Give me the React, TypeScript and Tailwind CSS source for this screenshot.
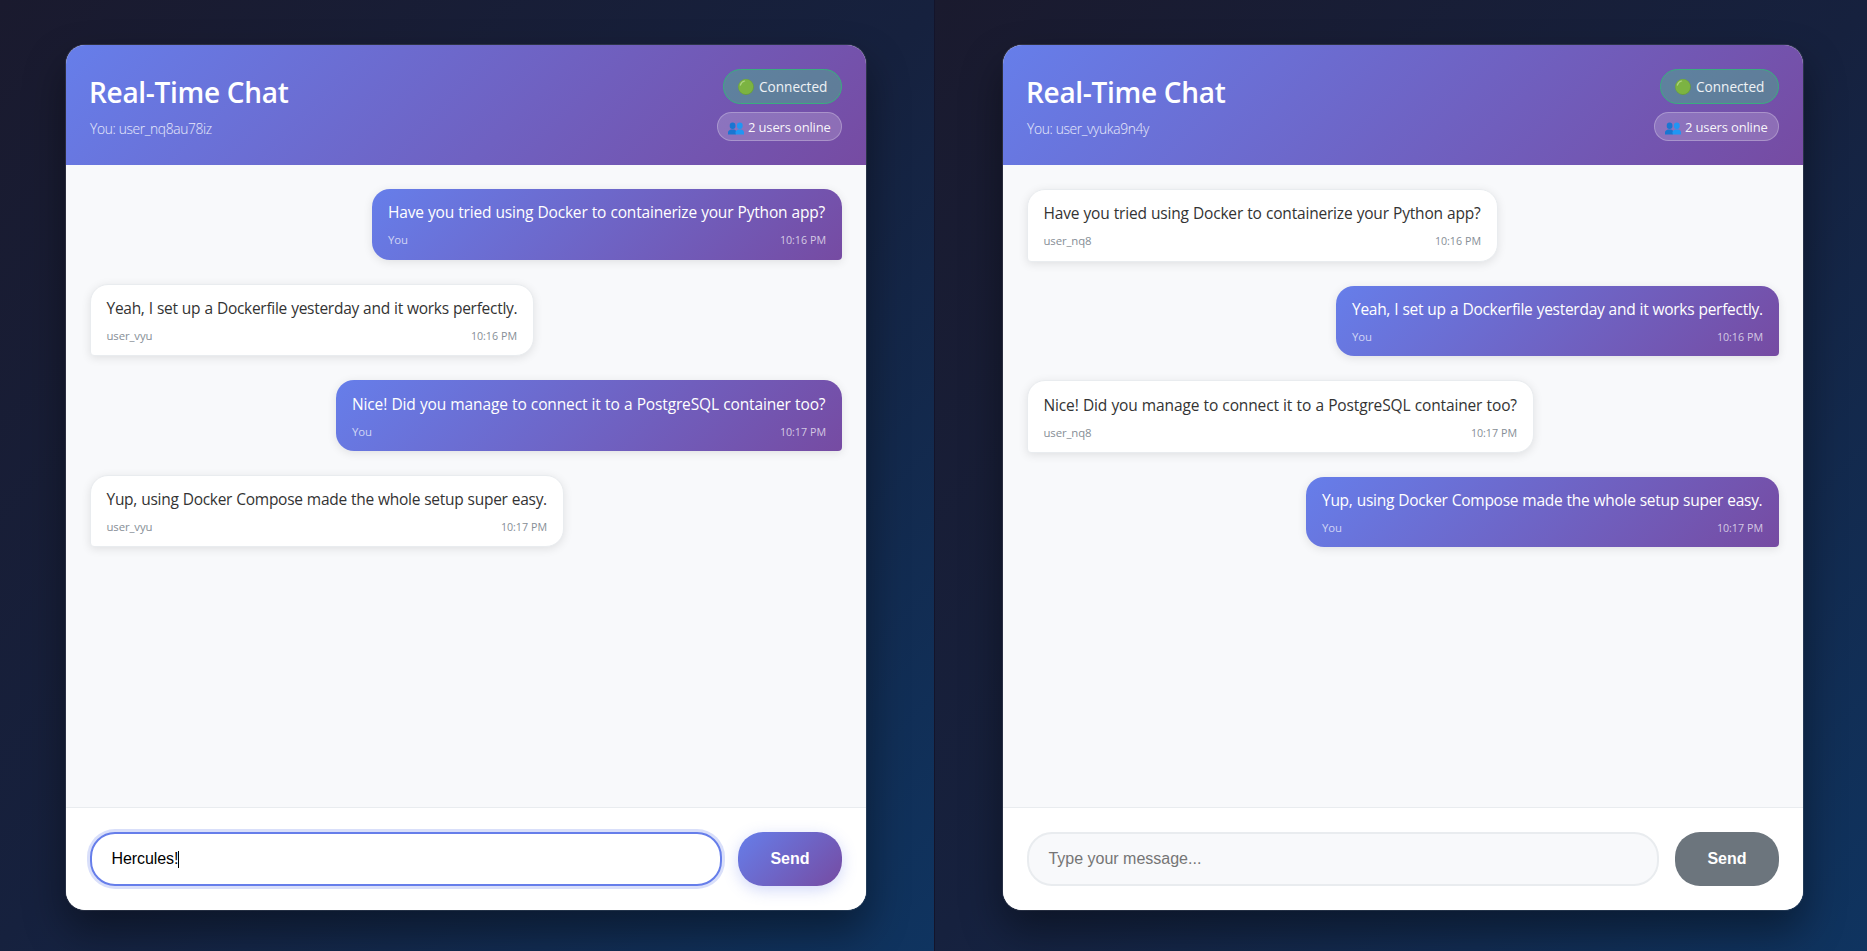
import React from 'react';

type Message = {
  own: boolean;
  author: string;
  text: string;
  time: string;
  bubble: string;
  tracking: string;
};

type PanelProps = {
  user: string;
  messages: Message[];
  className: string;
  children: React.ReactNode;
};

const HAVE = 'Have you tried using Docker to containerize your Python app?';
const YEAH = 'Yeah, I set up a Dockerfile yesterday and it works perfectly.';
const NICE = 'Nice! Did you manage to connect it to a PostgreSQL container too?';
const YUP = 'Yup, using Docker Compose made the whole setup super easy.';

const leftMessages: Message[] = [
  { own: true, author: 'You', text: HAVE, time: '10:16 PM', bubble: 'w-[470px]', tracking: 'tracking-[-0.19px]' },
  { own: false, author: 'user_vyu', text: YEAH, time: '10:16 PM', bubble: 'w-[444px]', tracking: 'tracking-[-0.28px]' },
  { own: true, author: 'You', text: NICE, time: '10:17 PM', bubble: 'w-[506px]', tracking: 'tracking-[-0.14px]' },
  { own: false, author: 'user_vyu', text: YUP, time: '10:17 PM', bubble: 'w-[474px]', tracking: 'tracking-[-0.28px]' },
];

const rightMessages: Message[] = [
  { own: false, author: 'user_nq8', text: HAVE, time: '10:16 PM', bubble: 'w-[471px]', tracking: 'tracking-[-0.19px]' },
  { own: true, author: 'You', text: YEAH, time: '10:16 PM', bubble: 'w-[443px]', tracking: 'tracking-[-0.28px]' },
  { own: false, author: 'user_nq8', text: NICE, time: '10:17 PM', bubble: 'w-[507px]', tracking: 'tracking-[-0.14px]' },
  { own: true, author: 'You', text: YUP, time: '10:17 PM', bubble: 'w-[473px]', tracking: 'tracking-[-0.28px]' },
];

function StatusDot() {
  return (
    <svg viewBox="0 0 16 16" className="size-4 shrink-0">
      <circle cx="8" cy="8" r="7.9" fill="#689f38" />
      <circle cx="7.8" cy="7.7" r="7.4" fill="#7cb342" />
      <path d="M2.4 6.2C3 4 4.6 2.4 6.6 2" stroke="#aed581" strokeWidth="1.2" strokeLinecap="round" fill="none" />
    </svg>
  );
}

function UsersIcon() {
  return (
    <svg viewBox="0 0 16 13" className="mt-1 h-[13px] w-4 shrink-0">
      <g fill="#1976d2">
        <ellipse cx="4.6" cy="3.7" rx="2.9" ry="3.3" />
        <path d="M0 12.6v-2.300C0 8.600 1.700 7.700 3.300 7.400h2.600c1.100.2 2.100.7 2.100 2.300v2.900z" />
      </g>
      <g fill="#2196f3">
        <ellipse cx="11.8" cy="3.7" rx="2.9" ry="3.3" />
        <path d="M7.600 12.600v-2.300c0-1.700 1.400-2.600 2.900-2.900h2.600c1.600.3 2.900 1.200 2.900 2.900v2.300z" />
      </g>
    </svg>
  );
}

function Bubble({ message }: { message: Message }) {
  const { own, author, text, time, bubble, tracking } = message;
  const skin = own
    ? 'h-[70.6px] self-end rounded-[18px] rounded-br-[4px] bg-[linear-gradient(135deg,#667eea_0%,#764ba2_100%)] pl-4 text-white'
    : 'h-[72.6px] self-start rounded-[18px] rounded-bl-[4px] border border-[#e9ecef] bg-white pl-[15.5px] text-[#333333]';
  return (
    <div className={`pt-[12.4px] pr-4 shadow-[0_2px_10px_rgba(0,0,0,0.1)] ${bubble} ${skin}`}>
      <p className={`h-[22.4px] text-[15.5px] leading-[22.4px] whitespace-nowrap [word-spacing:0.4px] ${tracking}`}>
        {text}
      </p>
      <div className={`mt-[8.6px] flex h-[16px] items-center justify-between ${own ? 'text-white/70' : 'text-[#868e96]'}`}>
        <span className="text-[11.4px] leading-4 tracking-[-0.12px]">{author}</span>
        <span className="text-[10.7px] leading-4 tracking-[-0.08px] [word-spacing:0.5px]">{time}</span>
      </div>
    </div>
  );
}

function ChatPanel({ user, messages, className, children }: PanelProps) {
  return (
    <section
      className={`h-[951px] shrink-0 overflow-hidden bg-[linear-gradient(135deg,#1a1a2e_0%,#16213e_50%,#0f3460_100%)] pt-11 ${className}`}
    >
      <div className="flex h-[867px] w-[802px] flex-col overflow-hidden rounded-[20px] border border-white/10 bg-white bg-clip-padding shadow-[0_20px_40px_rgba(0,0,0,0.4)]">
        <header className="flex h-[120px] shrink-0 justify-between bg-[linear-gradient(135deg,#667eea_0%,#764ba2_100%)] p-6 text-white">
          <div className="flex flex-col">
            <h1 className="mt-1 -ml-px h-[38px] text-[28px] leading-[38px] font-semibold tracking-[-0.3px] whitespace-nowrap">
              Real-Time Chat
            </h1>
            <p className="mt-2 text-[13.8px] leading-5 font-light tracking-[-0.35px] whitespace-nowrap text-white/85">
              You: {user}
            </p>
          </div>
          <div className="flex flex-col items-end gap-2">
            <div className="flex h-[35px] w-[119px] items-center gap-[5px] rounded-full border border-[#3aad80] bg-[#40c080]/40 pl-[14px] text-[13.6px] whitespace-nowrap text-white/90">
              <StatusDot />
              <span className="mt-[2px]">Connected</span>
            </div>
            <div className="flex h-[29px] w-[125px] items-center gap-1 rounded-full border border-white/25 bg-white/18 pl-[10px] text-[13px] tracking-[-0.15px] whitespace-nowrap text-white/95">
              <UsersIcon />
              <span className="mt-[3px]">2 users online</span>
            </div>
          </div>
        </header>
        <main className="flex grow flex-col gap-6 bg-[#f8f9fb] p-6">
          {messages.map((m) => (
            <Bubble key={m.text} message={m} />
          ))}
        </main>
        <footer className="flex h-[103px] shrink-0 gap-4 border-t border-[#e9ecef] bg-white p-6 font-['Liberation_Sans',Arial,sans-serif] text-base">
          {children}
        </footer>
      </div>
    </section>
  );
}

export default function App() {
  return (
    <div className="flex h-[951px] w-full overflow-hidden bg-[#14142a] font-['Open_Sans','Noto_Sans',sans-serif]">
      <ChatPanel user="user_nq8au78iz" messages={leftMessages} className="w-[934px] pl-[65px]">
        <div className="flex h-[54px] grow items-center rounded-[25px] border-2 border-[#667eea] bg-white pl-[19.4px] text-black shadow-[0_0_0_3px_rgba(102,126,234,0.25)]">
          <span className="tracking-[-0.06px]">Hercules!</span>
          <span className="h-[17px] w-px bg-black" />
        </div>
        <button className="h-[54px] w-[104px] rounded-[25px] bg-[linear-gradient(135deg,#667eea_0%,#764ba2_100%)] font-bold text-white shadow-[0_4px_15px_rgba(102,126,234,0.3)]">
          Send
        </button>
      </ChatPanel>
      <div className="w-px shrink-0 bg-[#14142a]" />
      <ChatPanel user="user_vyuka9n4y" messages={rightMessages} className="w-[932px] pl-[67px]">
        <div className="flex h-[54px] grow items-center rounded-[25px] border-2 border-[#e9ecef] bg-[#f8f9fb] pl-[19.4px] text-[#757575]">
          <span>Type your message...</span>
        </div>
        <button className="h-[54px] w-[104px] rounded-[25px] bg-[#6c757d] font-bold text-white">Send</button>
      </ChatPanel>
    </div>
  );
}
